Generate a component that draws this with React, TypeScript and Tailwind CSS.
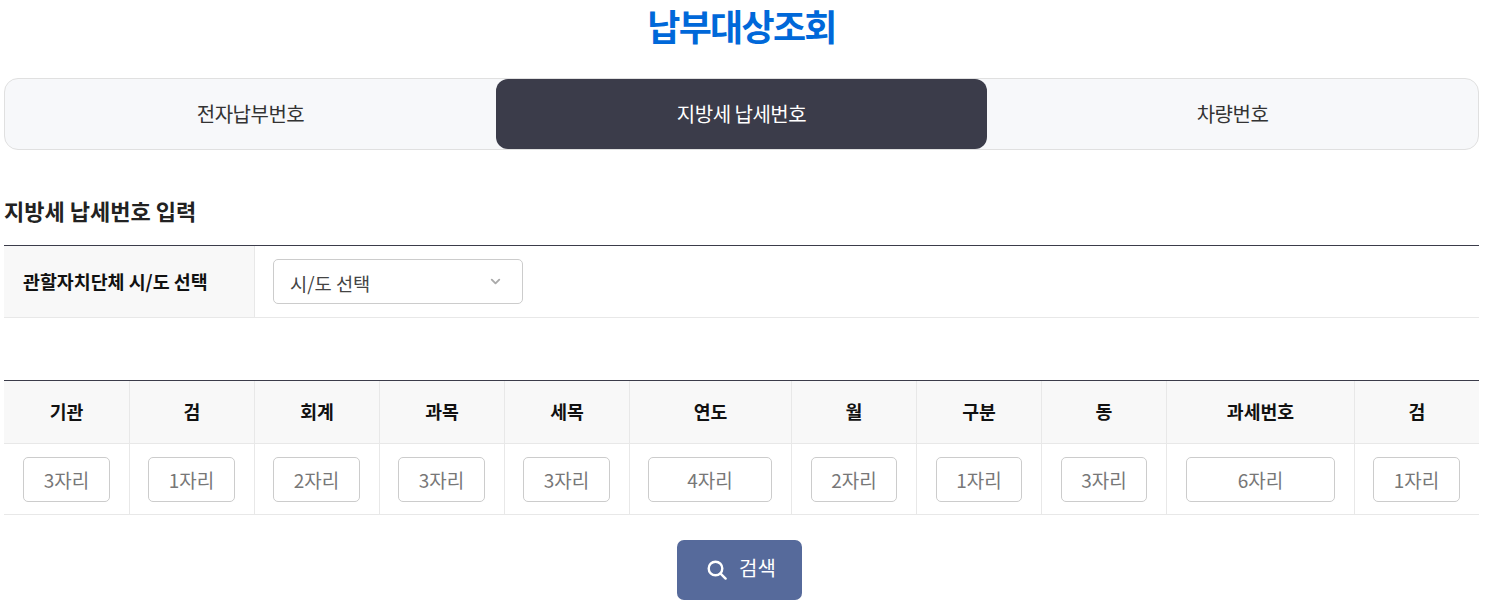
import React from 'react';
import { ChevronDown } from 'lucide-react';

const columns = [
  { label: '기관', hint: '3자리' },
  { label: '검', hint: '1자리' },
  { label: '회계', hint: '2자리' },
  { label: '과목', hint: '3자리' },
  { label: '세목', hint: '3자리' },
  { label: '연도', hint: '4자리' },
  { label: '월', hint: '2자리' },
  { label: '구분', hint: '1자리' },
  { label: '동', hint: '3자리' },
  { label: '과세번호', hint: '6자리' },
  { label: '검', hint: '1자리' },
];

const tabs = ['전자납부번호', '지방세 납세번호', '차량번호'];

export default function App() {
  return (
    <div className="h-[607px] overflow-hidden bg-white px-1 font-['Noto_Sans_CJK_KR','Noto_Sans',sans-serif] text-[#222]">
      <div className="w-[1475px]">
        <h1 className="h-[78px] pt-[2px] text-center text-[36px] leading-[46px] font-bold tracking-[-1.7px] text-[#0068d9]">
          납부대상조회
        </h1>

        {/* Tabs */}
        <div className="flex h-[72px] rounded-[14px] border border-[#e0e0e0] bg-[#f7f8fa]">
          {tabs.map((tab, i) => (
            <div
              key={tab}
              className={`flex flex-1 items-center justify-center rounded-[12px] text-[20px] tracking-[-0.5px] ${
                i === 1 ? 'bg-[#3b3c4a] text-white' : 'text-[#333]'
              }`}
            >
              {tab}
            </div>
          ))}
        </div>

        <h2 className="mt-[44px] h-[51px] text-[22px] leading-[32px] font-bold text-[#222]">
          지방세 납세번호 입력
        </h2>

        {/* Region select */}
        <div className="flex h-[73px] border-t border-b border-t-[#3b3c4a] border-b-[#e8e8e8]">
          <div className="flex w-[251px] items-center border-r border-[#e8e8e8] bg-[#f8f8f8] pl-[19px] text-[18.4px] font-bold text-[#111]">
            관할자치단체 시/도 선택
          </div>
          <div className="flex items-center pl-[18px]">
            <div className="flex h-[45px] w-[250px] items-center justify-between rounded-[5px] border border-[#cccccc] pr-[19px] pl-[16px] text-[18.7px] text-[#444]">
              <span className="pt-[4px]">시/도 선택</span>
              <ChevronDown className="h-[15px] w-[15px] text-[#aaa]" strokeWidth={3} />
            </div>
          </div>
        </div>

        {/* Tax number table */}
        <div className="mt-[62px] grid grid-cols-[126px_125px_125px_125px_125px_162px_125px_125px_125px_188px_124px] border-t border-[#3b3c4a]">
          {columns.map((col, i) => (
            <div
              key={i}
              className={`flex h-[63px] items-center justify-center border-b border-[#e8e8e8] bg-[#f8f8f8] text-[18.3px] font-bold text-[#111] ${
                i < columns.length - 1 ? 'border-r' : ''
              }`}
            >
              {col.label}
            </div>
          ))}
          {columns.map((col, i) => (
            <div
              key={i}
              className={`flex h-[71px] items-center border-b border-[#e8e8e8] pr-[19px] ${
                i === 0 || (i >= 6 && i <= 9) ? 'pl-[19px]' : 'pl-[18px]'
              } ${i < columns.length - 1 ? 'border-r' : ''}`}
            >
              <div className="flex h-[45px] w-full items-center justify-center rounded-[5px] border border-[#cccccc] pt-[3px] text-[19px] text-[#777]">
                {col.hint}
              </div>
            </div>
          ))}
        </div>

        <div className="mt-[25px] flex justify-center pr-[4px]">
          <button className="flex h-[60px] w-[125px] items-center justify-center gap-[12px] rounded-[7px] bg-[#566a9b] pb-[4px] pl-[4px] text-[20px] text-white">
            <svg viewBox="0 0 20 20" className="mt-[4px] h-[20px] w-[20px]" fill="none" stroke="currentColor" strokeWidth="2.4" strokeLinecap="round">
              <circle cx="8.5" cy="8.5" r="6.8" />
              <path d="M13.6 13.6L18.6 18.6" />
            </svg>
            검색
          </button>
        </div>
      </div>
    </div>
  );
}
